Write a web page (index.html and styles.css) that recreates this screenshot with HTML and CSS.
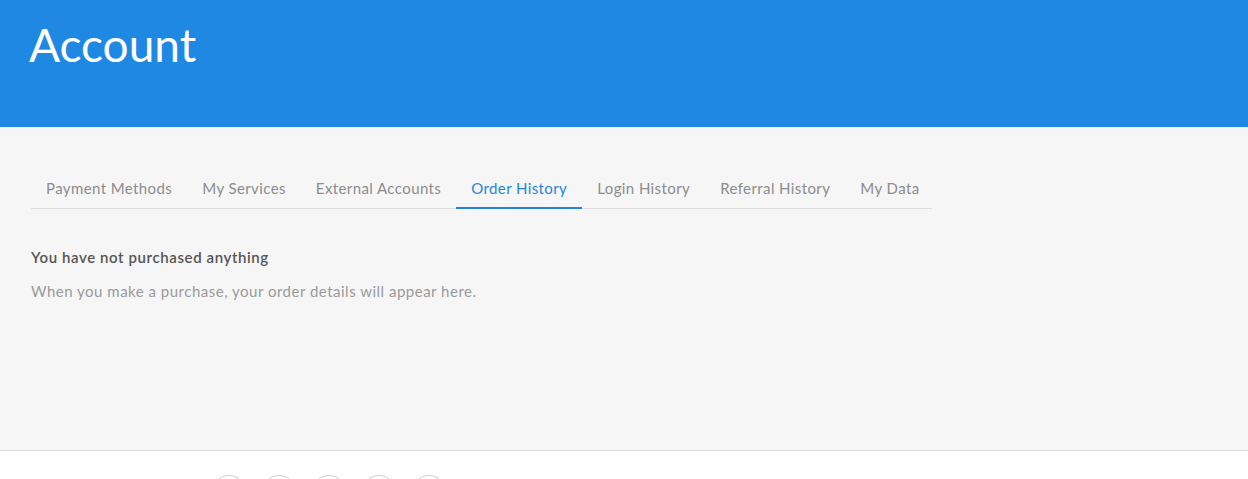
FILE: index.html
```html
<!DOCTYPE html>
<html lang="en">
<head>
<meta charset="utf-8">
<title>Account</title>
<link rel="stylesheet" href="styles.css">
</head>
<body>
<header class="hero">
  <h1 class="hero-title">Account</h1>
</header>
<main class="main">
  <nav class="tabs">
    <a class="tab">Payment Methods</a>
    <a class="tab">My Services</a>
    <a class="tab">External Accounts</a>
    <a class="tab active">Order History</a>
    <a class="tab">Login History</a>
    <a class="tab">Referral History</a>
    <a class="tab">My Data</a>
  </nav>
  <section class="empty">
    <h2 class="empty-title">You have not purchased anything</h2>
    <p class="empty-text">When you make a purchase, your order details will appear here.</p>
  </section>
</main>
<footer class="footer">
  <div class="socials">
    <span class="social"></span>
    <span class="social"></span>
    <span class="social"></span>
    <span class="social"></span>
    <span class="social"></span>
  </div>
</footer>
</body>
</html>
```
FILE: styles.css
```css
* { box-sizing: border-box; }
html, body { margin: 0; padding: 0; }
body {
  font-family: Lato, "Open Sans", sans-serif;
  background: #ffffff;
  overflow: hidden;
}
.hero {
  background: #1f88e2;
  height: 127px;
  padding: 19px 29px 0;
}
.hero-title {
  margin: 0;
  color: #ffffff;
  font-weight: 400;
  font-size: 46px;
  line-height: 52px;
}
.main {
  background: #f6f6f6;
  height: 324px;
  border-bottom: 1px solid #dcdcdc;
  padding: 49px 31px 0;
}
.tabs {
  display: flex;
  width: 901px;
  border-bottom: 1px solid #dedede;
}
.tab {
  flex: none;
  white-space: nowrap;
  padding: 2px 15px 9px;
  font-size: 15px;
  line-height: 20px;
  letter-spacing: 0.4px;
  color: #8c8c8c;
  border-bottom: 2px solid transparent;
  margin-bottom: -1px;
}
.tab.active {
  color: #2286e0;
  border-bottom-color: #2286e0;
}
.empty { padding-top: 38px; }
.empty-title {
  margin: 0;
  font-size: 15px;
  line-height: 20px;
  font-weight: 600;
  letter-spacing: 0.6px;
  color: #555555;
}
.empty-text {
  margin: 14px 0 0;
  font-size: 15px;
  line-height: 20px;
  letter-spacing: 0.5px;
  color: #9a9a9a;
}
.footer {
  padding: 24px 0 0 212px;
}
.socials { display: flex; gap: 16px; }
.social {
  width: 34px;
  height: 34px;
  border: 1px solid #cfcfcf;
  border-radius: 50%;
}
```
